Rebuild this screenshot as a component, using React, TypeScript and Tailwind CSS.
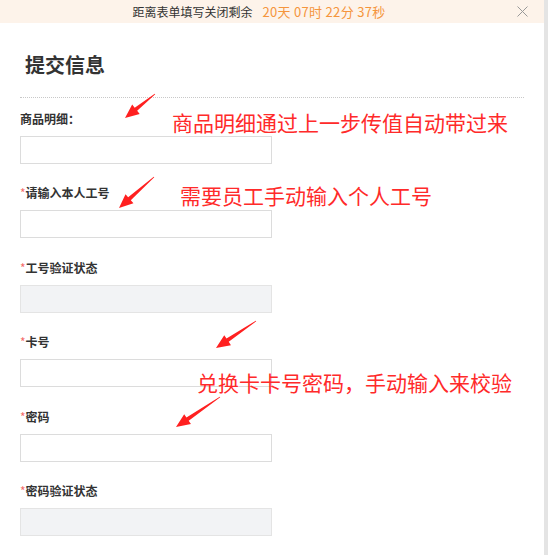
import React from 'react';

const fields = [
  { label: '商品明细：', required: false, disabled: false },
  { label: '请输入本人工号', required: true, disabled: false },
  { label: '工号验证状态', required: true, disabled: true },
  { label: '卡号', required: true, disabled: false },
  { label: '密码', required: true, disabled: false },
  { label: '密码验证状态', required: true, disabled: true },
];

const arrows = [
  [155, 94, 125, 118],
  [154, 177, 119, 208],
  [256, 321, 216, 348],
  [220, 397, 176, 427],
];

const arrowPoints = (x1: number, y1: number, x2: number, y2: number) => {
  const len = Math.hypot(x2 - x1, y2 - y1);
  const dx = (x2 - x1) / len;
  const dy = (y2 - y1) / len;
  const nx = -dy;
  const ny = dx;
  const bx = x2 - dx * 14;
  const by = y2 - dy * 14;
  const p = (x: number, y: number, k: number) => `${x + nx * k},${y + ny * k}`;
  return [p(x1, y1, 0.4), p(bx, by, 2), p(bx, by, 6), `${x2},${y2}`, p(bx, by, -6), p(bx, by, -2), p(x1, y1, -0.4)].join(' ');
};

const App = () => {
  return (
    <div
      className="relative flex w-[548px] h-[555px] overflow-hidden bg-[#e4e4e4]"
      style={{ fontFamily: '"Noto Sans CJK SC", "Noto Sans", sans-serif' }}
    >
      <div className="w-[544px] h-full bg-white flex flex-col">
        <div className="relative h-[23px] bg-[#fdf3ea] flex items-center justify-center pr-[26px] leading-none">
          <span className="text-[12px] text-[#333]">距离表单填写关闭剩余</span>
          <span className="ml-[10px] text-[13px] text-[#f5953c] tracking-[0.3px]">20天 07时 22分 37秒</span>
          <svg className="absolute right-[16px] top-[6px]" width="11" height="11" viewBox="0 0 11 11">
            <path d="M0.5 0.5 L10.5 10.5 M10.5 0.5 L0.5 10.5" stroke="#999" strokeWidth="1" fill="none" />
          </svg>
        </div>

        <div className="px-[20px] pt-[28px]">
          <h1 className="ml-[5px] text-[20px] leading-[28px] font-bold text-[#333]">提交信息</h1>
          <div className="mt-[18px] border-b border-dotted border-[#c8c8c8]" />

          <div className="mt-[13px] flex flex-col gap-[21.4px]">
            {fields.map((f) => (
              <div key={f.label} className="flex flex-col">
                <div className="h-[16px] flex items-center text-[12px] font-semibold text-[#333]">
                  {f.required && <span className="text-[#f56c6c] font-normal">*</span>}
                  {f.label}
                </div>
                <div
                  className={
                    f.disabled
                      ? 'mt-[9px] w-[252px] h-[28px] border border-[#e4e4e4] bg-[#f2f3f5]'
                      : 'mt-[9px] w-[252px] h-[28px] border border-[#dcdcdc] bg-white'
                  }
                />
              </div>
            ))}
          </div>
        </div>
      </div>

      <div className="absolute left-[172px] top-[111px] text-[21px] leading-[22px] text-[#ff2a2a]">
        商品明细通过上一步传值自动带过来
      </div>
      <div className="absolute left-[180px] top-[184px] text-[21px] leading-[22px] text-[#ff2a2a]">
        需要员工手动输入个人工号
      </div>
      <div className="absolute left-[197px] top-[371px] text-[21px] leading-[22px] text-[#ff2a2a]">
        兑换卡卡号密码，手动输入来校验
      </div>

      <svg className="absolute left-0 top-0 pointer-events-none" width="548" height="555">
        {arrows.map(([x1, y1, x2, y2], i) => (
          <polygon key={i} points={arrowPoints(x1, y1, x2, y2)} fill="#ff2020" />
        ))}
      </svg>
    </div>
  );
};

export default App;
